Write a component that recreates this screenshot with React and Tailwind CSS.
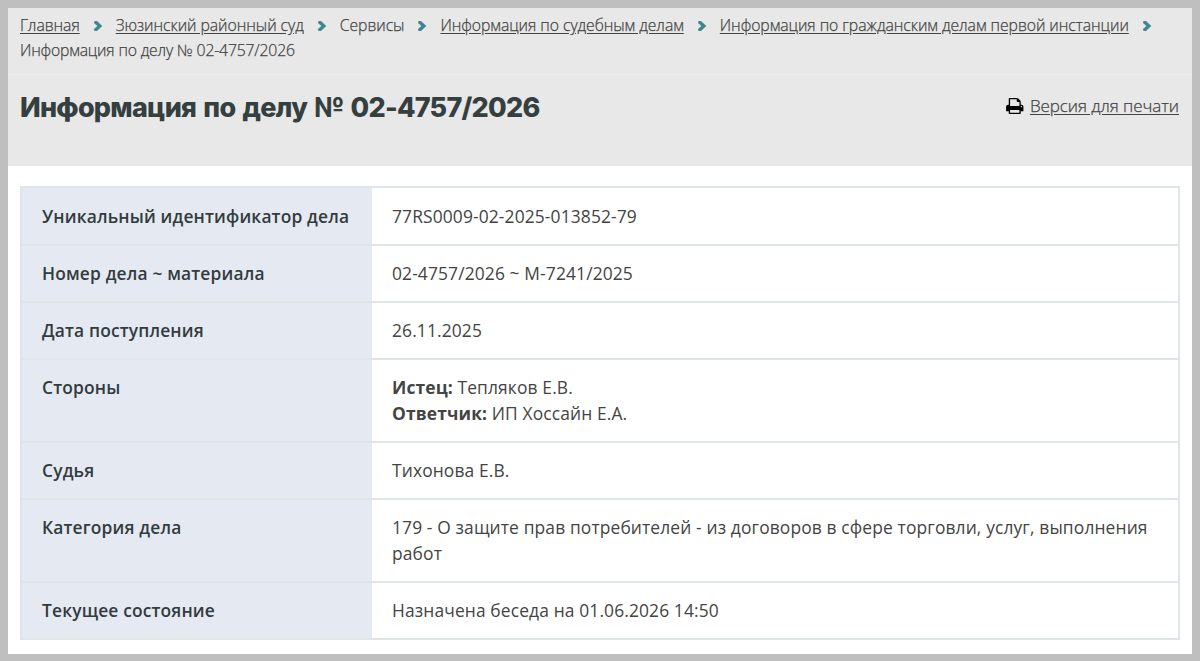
const crumbs = [
  { label: "Главная", link: true },
  { label: "Зюзинский районный суд", link: true },
  { label: "Сервисы", link: false },
  { label: "Информация по судебным делам", link: true },
  { label: "Информация по гражданским делам первой инстанции", link: true },
];

const rows = [
  { name: "Уникальный идентификатор дела", value: "77RS0009-02-2025-013852-79" },
  { name: "Номер дела ~ материала", value: "02-4757/2026 ~ М-7241/2025" },
  { name: "Дата поступления", value: "26.11.2025" },
  {
    name: "Стороны",
    value: (
      <>
        <strong className="font-bold">Истец:</strong> Тепляков Е.В.
        <br />
        <strong className="font-bold">Ответчик:</strong> ИП Хоссайн Е.А.
      </>
    ),
  },
  { name: "Судья", value: "Тихонова Е.В." },
  {
    name: "Категория дела",
    value: "179 - О защите прав потребителей - из договоров в сфере торговли, услуг, выполнения работ",
  },
  { name: "Текущее состояние", value: "Назначена беседа на 01.06.2026 14:50" },
];

function Chevron() {
  return (
    <svg viewBox="0 0 8 10" className="mt-[1px] h-[10px] w-2 shrink-0 overflow-visible" aria-hidden="true">
      <path d="M.5 0H3L8.300 5 3 10H.5L0 8 3.400 5 0 2z" fill="#3f8791" />
    </svg>
  );
}

function PrintIcon() {
  return (
    <svg viewBox="0 128 1664 1536" className="h-4 w-[17.5px]" fill="#000" aria-hidden="true">
      <path d="M384 1536h896v-256h-896v256zM384 896h896v-384h-160q-40 0-68-28t-28-68v-160h-640v640zM1536 960q0-26-19-45t-45-19-45 19-19 45 19 45 45 19 45-19 19-45zM1664 960v416q0 13-9.500 22.500t-22.500 9.500h-224v160q0 40-28 68t-68 28h-960q-40 0-68-28t-28-68v-160h-224q-13 0-22.500-9.500t-9.500-22.500v-416q0-79 56.500-135.500t135.500-56.500h64v-544q0-40 28-68t68-28h672q40 0 88 20t76 48l152 152q28 28 48 76t20 88v256h64q79 0 135.500 56.500t56.500 135.500z" />
    </svg>
  );
}

// Breadcrumb trail, the current page goes on its own line
function Breadcrumbs() {
  return (
    <nav className="h-[67px] border-b border-[#ededed] px-3 pt-[5px] text-[15.75px] leading-[25px] font-light tracking-[-0.05px] text-[#444] [-webkit-text-stroke:0.25px]">
      <div className="flex items-center whitespace-nowrap">
        {crumbs.map((c) => (
          <span key={c.label} className="mr-[14px] flex items-center gap-[14px]">
            {c.link ? (
              <a href="#" className="underline underline-offset-2">{c.label}</a>
            ) : (
              <span>{c.label}</span>
            )}
            <Chevron />
          </span>
        ))}
      </div>
      <div className="tracking-[-0.18px]">Информация по делу № 02-4757/2026</div>
    </nav>
  );
}

export default function App() {
  return (
    <div className="h-[661px] w-[1200px] overflow-hidden bg-[#bfbfbf] px-2 pt-2 pb-[7px] font-['Open_Sans',sans-serif]">
      <div className="h-[646px] bg-white">
        <header className="h-[158px] bg-[#e8e8e8]">
          <Breadcrumbs />
          <div className="flex items-start justify-between pr-[13px] pl-3">
            <h1 className="pt-[15px] font-['Inter',sans-serif] text-[27px] leading-9 font-extrabold tracking-[-0.75px] [word-spacing:2px] whitespace-nowrap text-[#353f3f]">
              Информация по делу № 02-4757/2026
            </h1>
            <a href="#" className="flex items-center gap-[6px] pt-[18px] text-[17px] leading-[25px] font-light tracking-[-0.05px] text-[#444] [-webkit-text-stroke:0.25px]">
              <PrintIcon />
              <span className="underline underline-offset-2">Версия для печати</span>
            </a>
          </div>
        </header>

        <table className="mx-3 mt-5 w-[1160px] table-fixed border-collapse border-2 border-[#dfe4e6] text-[17.4px] leading-[26px] tracking-[0.13px] text-[#444]">
          <tbody>
            {rows.map((row) => (
              <tr key={row.name} className="border-b-2 border-[#dfe4e6] *:pt-[13.5px] *:pb-[15.5px] first:*:pt-[14.5px]">
                <th className="w-[351px] bg-[#e5eaf2] pl-5 text-left align-top font-semibold tracking-[0.15px] text-[#333b3e]">
                  {row.name}
                </th>
                <td className="px-5 align-top">{row.value}</td>
              </tr>
            ))}
          </tbody>
        </table>
      </div>
    </div>
  );
}
